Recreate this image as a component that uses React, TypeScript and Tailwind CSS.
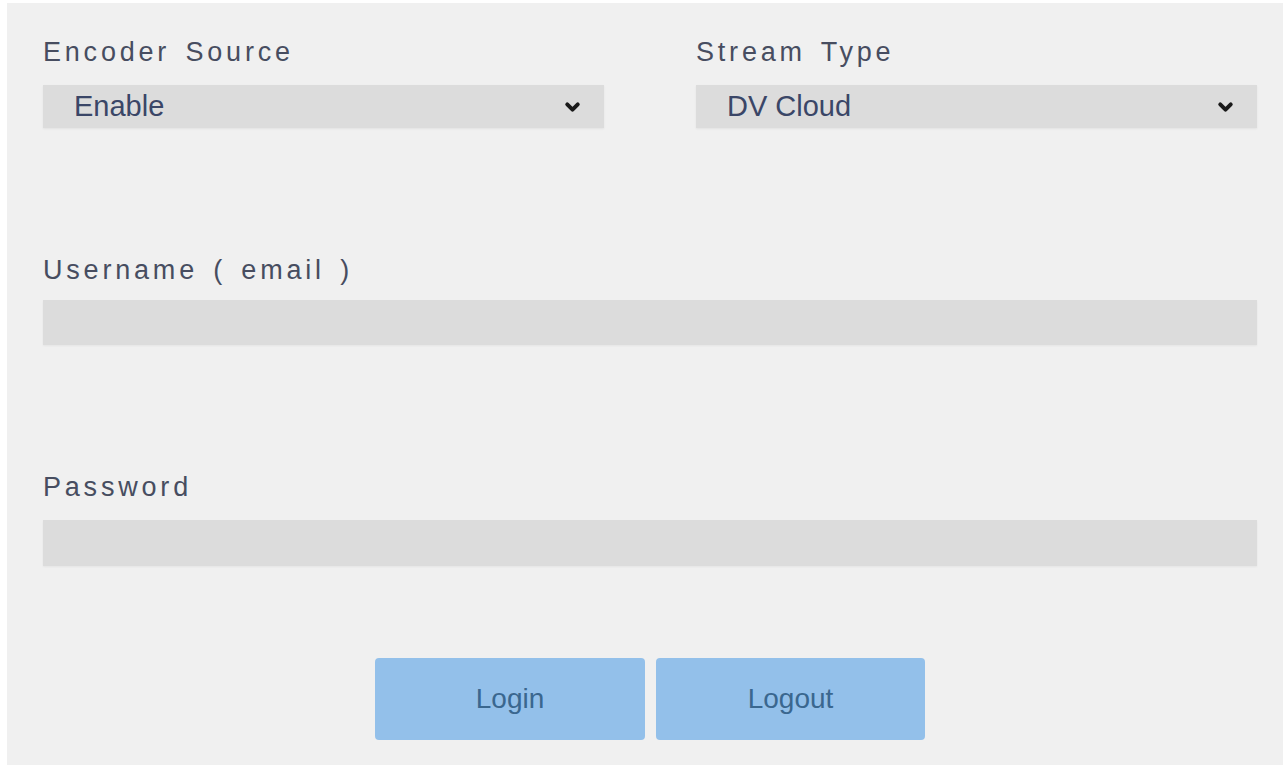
import { ChevronDown } from "lucide-react";

const labelCls =
  "block h-[30px] leading-[30px] text-[27px] tracking-[3.8px] [word-spacing:4px] text-[#474d60]";

function SelectField({
  label,
  value,
  options,
}: {
  label: string;
  value: string;
  options: string[];
}) {
  return (
    <div className="w-[561px]">
      <label className={labelCls}>{label}</label>
      <div className="relative mt-[18px] h-[43px]">
        <select
          defaultValue={value}
          className="h-full w-full appearance-none bg-[#dcdcdc] pl-[31px] text-[29px] text-[#3a4667] outline-none shadow-[0_1px_2px_rgba(0,0,0,0.06)]"
        >
          {options.map((o) => (
            <option key={o}>{o}</option>
          ))}
        </select>
        <ChevronDown
          className="pointer-events-none absolute right-[21px] top-1/2 h-[21px] w-[21px] -translate-y-1/2 text-[#1a1a1a]"
          strokeWidth={4.5}
          aria-hidden="true"
        />
      </div>
    </div>
  );
}

function TextField({
  label,
  type,
  top,
  gap,
  height,
}: {
  label: string;
  type: string;
  top: string;
  gap: string;
  height: string;
}) {
  return (
    <div className={top}>
      <label className={labelCls}>{label}</label>
      <input
        type={type}
        className={`${gap} ${height} block w-full bg-[#dcdcdc] px-4 text-[22px] outline-none shadow-[0_1px_2px_rgba(0,0,0,0.05)]`}
      />
    </div>
  );
}

export default function App() {
  return (
    <div
      className="min-h-screen bg-white pt-[3px] pl-[7px]"
      style={{ fontFamily: '"Liberation Sans", Arial, sans-serif' }}
    >
      <div className="h-[762px] w-[1276px] bg-[#f0f0f0] pl-9 pt-[34px]">
        <div className="w-[1214px]">
          {/* Encoder / stream selectors */}
          <div className="flex justify-between">
            <SelectField label="Encoder Source" value="Enable" options={["Enable", "Disable"]} />
            <SelectField label="Stream Type" value="DV Cloud" options={["DV Cloud", "RTMP", "RTSP"]} />
          </div>

          <TextField label="Username ( email )" type="email" top="mt-[127px]" gap="mt-[15px]" height="h-[45px]" />
          <TextField label="Password" type="password" top="mt-[127px]" gap="mt-[18px]" height="h-[46px]" />

          <div className="mt-[92px] flex justify-center gap-[11px]">
            <button className="h-[82px] w-[270px] rounded-[4px] bg-[#93c0ea] text-[28px] text-[#3a678f]">
              Login
            </button>
            <button className="h-[82px] w-[269px] rounded-[4px] bg-[#93c0ea] text-[28px] text-[#3a678f]">
              Logout
            </button>
          </div>
        </div>
      </div>
    </div>
  );
}
